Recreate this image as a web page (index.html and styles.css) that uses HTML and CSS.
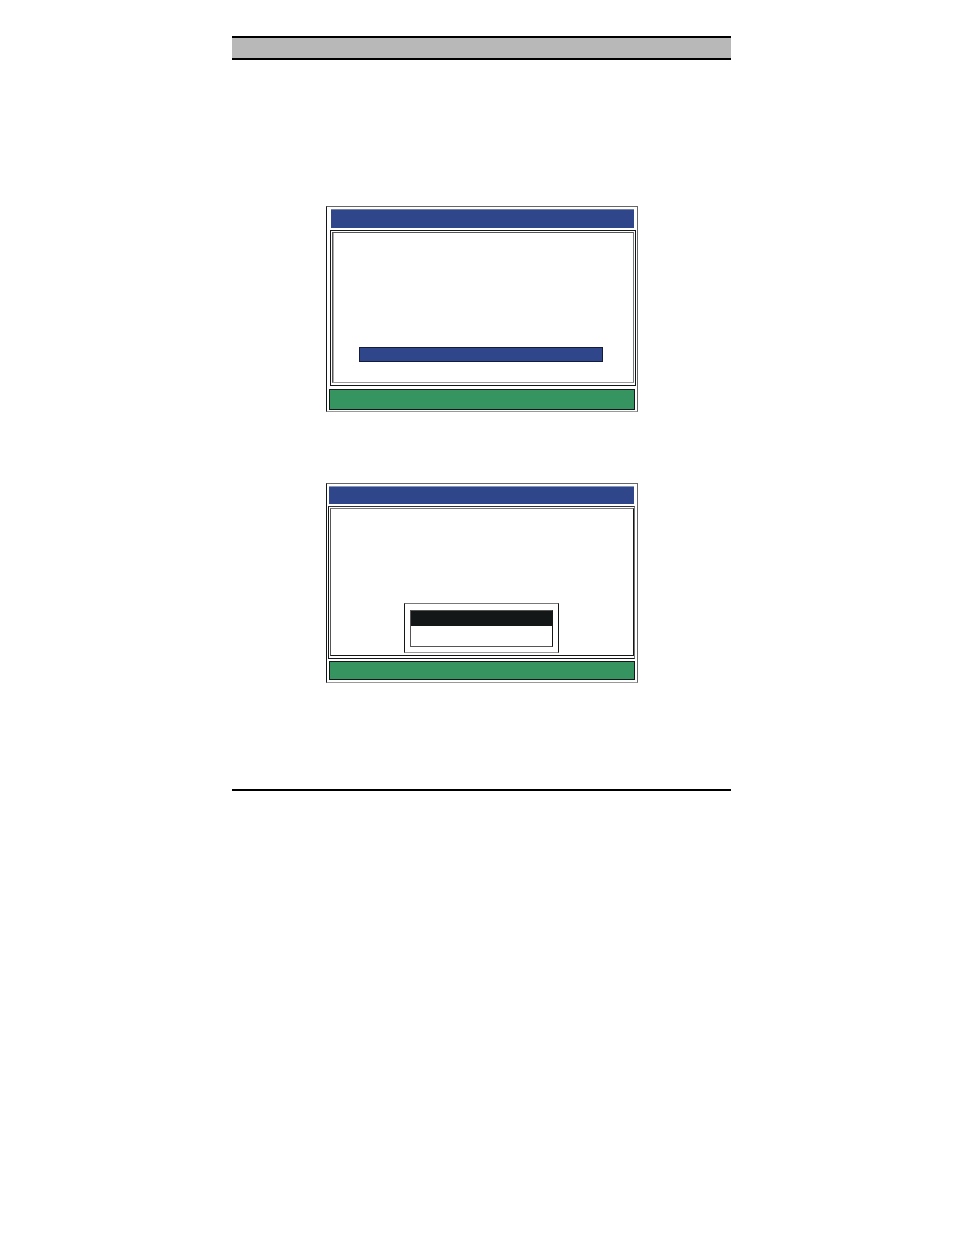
FILE: index.html
```html
<!DOCTYPE html>
<html lang="en">
<head>
<meta charset="utf-8">
<title>Manual page</title>
<link rel="stylesheet" href="styles.css">
</head>
<body>
<div class="page">
  <header class="page-header"></header>
  <main class="figures">
    <section class="screen screen-entry">
      <div class="screen-title"></div>
      <div class="frame">
        <div class="frame-inner">
          <div class="highlight"></div>
        </div>
      </div>
      <div class="status"></div>
    </section>
    <section class="screen screen-menu">
      <div class="screen-title"></div>
      <div class="frame">
        <div class="frame-inner">
          <div class="dialog">
            <div class="options">
              <div class="option option-selected"></div>
              <div class="option"></div>
            </div>
          </div>
        </div>
      </div>
      <div class="status"></div>
    </section>
  </main>
  <footer class="page-footer"></footer>
</div>
</body>
</html>
```
FILE: styles.css
```css
* {
  box-sizing: border-box;
}

body {
  margin: 0;
  background: #fff;
  font-family: "Liberation Sans", sans-serif;
}

.page {
  padding: 36px 223px 0 232px;
}

.page-header {
  height: 24px;
  border-top: 2px solid #000;
  border-bottom: 2px solid #000;
  background: #b8b8b8;
}

.figures {
  display: flex;
  flex-direction: column;
  align-items: center;
  gap: 71px;
  padding: 146px 0 106px;
}

.page-footer {
  border-top: 2px solid #000;
}

.screen {
  display: flex;
  flex-direction: column;
  width: 100%;
  max-width: 312px;
  border: 1px solid #666;
  border-left-color: #141718;
}

.screen-title {
  background: #2f468b;
}

.frame {
  display: flex;
  padding: 1px 1px 2px;
  border: 1px solid #141718;
}

.frame-inner {
  display: flex;
  flex: 1;
  flex-direction: column;
  align-items: center;
  border: 1px solid #555;
}

.status {
  border: 1px solid #141718;
  background: #35945f;
}

.screen-entry {
  padding: 2px 1px 1px 2px;
  border-bottom-color: #999;
}

.screen-entry .screen-title {
  height: 19px;
  margin: 0 2px;
  border-top: 1px solid #7480a5;
}

.screen-entry .frame {
  margin: 2px 0 3px 1px;
}

.screen-entry .frame-inner {
  padding: 114px 30px 20px 26px;
  border-color: #555 #777 #999 #555;
  box-shadow: inset 1px 0 #aaa;
}

.screen-entry .status {
  height: 21px;
  margin-right: 1px;
}

.highlight {
  width: 100%;
  height: 15px;
  border: 1px solid #141c38;
  background: #2f468b;
}

.screen-menu {
  padding: 2px 2px 2px 1px;
  border-bottom-color: #999;
}

.screen-menu .screen-title {
  height: 18px;
  margin: 0 1px;
  border-top: 1px solid #8997bd;
}

.screen-menu .frame {
  margin: 2px 0;
  padding: 1px 0 2px 1px;
  border-color: #333 #777 #141718 #141718;
}

.screen-menu .frame-inner {
  padding: 94px 0 2px;
  border-color: #777 #141718 #141718 #555;
}

.screen-menu .status {
  height: 19px;
  margin-left: 1px;
}

.dialog {
  width: 155px;
  padding: 6px 5px 5px;
  border: 1px solid #141718;
  border-top-color: #777;
  border-bottom-color: #999;
}

.options {
  border: 1px solid #555;
  border-right-color: #141718;
}

.option {
  height: 20px;
}

.option-selected {
  height: 15px;
  background: #141718;
}
```
